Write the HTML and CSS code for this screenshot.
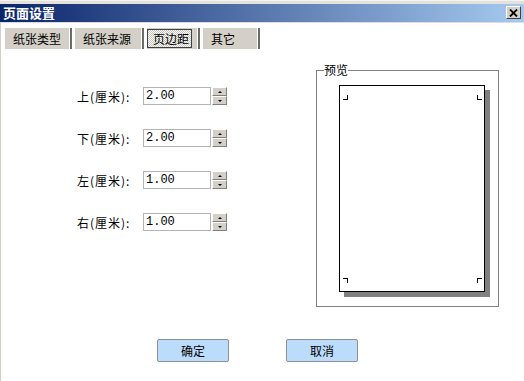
FILE: index.html
```html
<!DOCTYPE html>
<html lang="zh-CN">
<head>
  <meta charset="UTF-8" />
  <title>页面设置</title>
  <link rel="stylesheet" href="styles.css">
</head>
<body>
  <div class="window">
    <div class="frame-top"></div>

    <div class="titlebar">
      <span class="title">页面设置</span>
      <span class="close">
        <svg width="9" height="8" viewBox="0 0 9 8"><path d="M1 0.5 L8 7.5 M8 0.5 L1 7.5" stroke="#000" stroke-width="1.8" fill="none"/></svg>
      </span>
    </div>

    <div class="body">
      <div class="tabs">
        <div class="tab tab-type">纸张类型</div>
        <div class="tab tab-source">纸张来源</div>
        <div class="tab tab-margin active"><span>页边距</span></div>
        <div class="tab tab-other">其它</div>
      </div>

      <div class="content">
        <div class="form">
          <div class="row">
            <label>上(厘米):</label>
            <div class="spin">
              <input type="text" value="2.00">
              <div class="arrows"><span class="up"></span><span class="down"></span></div>
            </div>
          </div>
          <div class="row">
            <label>下(厘米):</label>
            <div class="spin">
              <input type="text" value="2.00">
              <div class="arrows"><span class="up"></span><span class="down"></span></div>
            </div>
          </div>
          <div class="row">
            <label>左(厘米):</label>
            <div class="spin">
              <input type="text" value="1.00">
              <div class="arrows"><span class="up"></span><span class="down"></span></div>
            </div>
          </div>
          <div class="row">
            <label>右(厘米):</label>
            <div class="spin">
              <input type="text" value="1.00">
              <div class="arrows"><span class="up"></span><span class="down"></span></div>
            </div>
          </div>
        </div>

        <!-- 预览 -->
        <fieldset class="preview">
          <legend>预览</legend>
          <div class="page">
            <div class="marks">
              <span class="mark mark-tl"></span>
              <span class="mark mark-tr"></span>
            </div>
            <div class="marks">
              <span class="mark mark-bl"></span>
              <span class="mark mark-br"></span>
            </div>
          </div>
        </fieldset>
      </div>

      <div class="actions">
        <button type="button">确定</button>
        <button type="button">取消</button>
      </div>
    </div>
  </div>
</body>
</html>
```

FILE: styles.css
```css
:root {
  --face: #d4d0c8;
  --shadow: #808080;
  --dark: #404040;
}

body {
  margin: 0;
  font-family: "Noto Sans CJK SC", "Liberation Sans", sans-serif;
  font-size: 12px;
  color: #000;
  background: #fff;
}

.window {
  width: 524px;
  height: 381px;
  display: flex;
  flex-direction: column;
  overflow: hidden;
}

.frame-top {
  height: 4px;
  background: #e4e2dc;
  border-top: 1px solid #f4f3ef;
  box-sizing: border-box;
}

.titlebar {
  height: 19px;
  box-sizing: border-box;
  border-bottom: 1px solid #e0ddd6;
  background: linear-gradient(to right, #0a246a, #a6caf0);
  display: flex;
  align-items: flex-start;
  justify-content: space-between;
}

.title {
  color: #fff;
  font-weight: bold;
  font-size: 13px;
  line-height: 18px;
  padding-left: 3px;
}

.close {
  width: 15px;
  height: 13px;
  margin: 2px 3px 0 0;
  box-sizing: border-box;
  background: var(--face);
  border: 1px solid;
  border-color: #fff var(--dark) var(--dark) #fff;
  display: flex;
  align-items: center;
  justify-content: center;
}

.body {
  flex: 1;
  border-left: 1px solid var(--face);
  display: flex;
  flex-direction: column;
}

/* Tabs */
.tabs {
  display: flex;
  gap: 6px;
  margin-top: 5px;
  padding-left: 4px;
}

.tab {
  height: 21px;
  line-height: 21px;
  padding-left: 8px;
  box-sizing: border-box;
  background: var(--face);
  box-shadow: 1px 0 0 #fff, 3px 0 0 #6a6a6a;
}

.tab-type { width: 64px; }
.tab-source { width: 66px; }
.tab-margin { width: 50px; }
.tab-other { width: 54px; }

.tab.active {
  padding: 1px 0 0 0;
}

.tab.active span {
  display: block;
  width: 45px;
  height: 19px;
  line-height: 17px;
  box-sizing: border-box;
  padding-left: 5px;
  border: 1px solid var(--dark);
  background: repeating-conic-gradient(#fff 0 25%, #c8c4bc 0 50%) 0 0 / 2px 2px;
}

/* Form */
.content {
  display: flex;
  align-items: flex-start;
  padding-left: 76px;
}

.form {
  margin-top: 38px;
  display: flex;
  flex-direction: column;
  gap: 24px;
}

.row {
  display: flex;
  align-items: center;
  height: 18px;
}

.row label {
  width: 66px;
  letter-spacing: 1px;
}

.spin {
  display: flex;
  gap: 1px;
}

.spin input {
  width: 68px;
  height: 18px;
  box-sizing: border-box;
  margin: 0;
  padding: 0 2px;
  border: 1px solid #b4b4b4;
  font-family: "Liberation Mono", monospace;
  font-size: 12px;
  outline: none;
}

.arrows {
  display: flex;
  flex-direction: column;
}

.arrows span {
  width: 15px;
  height: 9px;
  box-sizing: border-box;
  background: var(--face);
  border: 1px solid;
  border-color: #fff var(--shadow) var(--shadow) #fff;
  display: flex;
  align-items: center;
  justify-content: center;
}

.arrows .up::after,
.arrows .down::after {
  content: "";
  border-left: 2px solid transparent;
  border-right: 2px solid transparent;
}

.arrows .up::after { border-bottom: 2px solid #000; }
.arrows .down::after { border-top: 2px solid #000; }

/* Preview */
.preview {
  width: 183px;
  height: 245px;
  box-sizing: border-box;
  margin: 13px 0 0 89px;
  padding: 0 0 0 7px;
  border: 1px solid var(--shadow);
}

.preview legend {
  padding: 0;
  line-height: 16px;
}

.page {
  width: 146px;
  height: 207px;
  box-sizing: border-box;
  margin: 7px 0 0 15px;
  padding: 9px 2px 8px 3px;
  background: #fff;
  border: 1px solid #000;
  box-shadow: 5px 5px 0 var(--shadow);
  display: flex;
  flex-direction: column;
  justify-content: space-between;
}

.marks {
  display: flex;
  justify-content: space-between;
}

.mark {
  width: 5px;
  height: 5px;
  box-sizing: border-box;
}

.mark-tl { border-right: 1px solid #000; border-bottom: 1px solid #000; }
.mark-tr { border-left: 1px solid #000; border-bottom: 1px solid #000; }
.mark-bl { border-right: 1px solid #000; border-top: 1px solid #000; }
.mark-br { border-left: 1px solid #000; border-top: 1px solid #000; }

/* Buttons */
.actions {
  display: flex;
  gap: 57px;
  margin-top: 32px;
  padding-left: 156px;
}

.actions button {
  width: 72px;
  height: 23px;
  padding: 0;
  background: #bcdcfc;
  border: 1px solid #8e8f8f;
  border-radius: 2px;
  font-family: "Noto Sans CJK SC", sans-serif;
  font-size: 12px;
  color: #000;
}
```
